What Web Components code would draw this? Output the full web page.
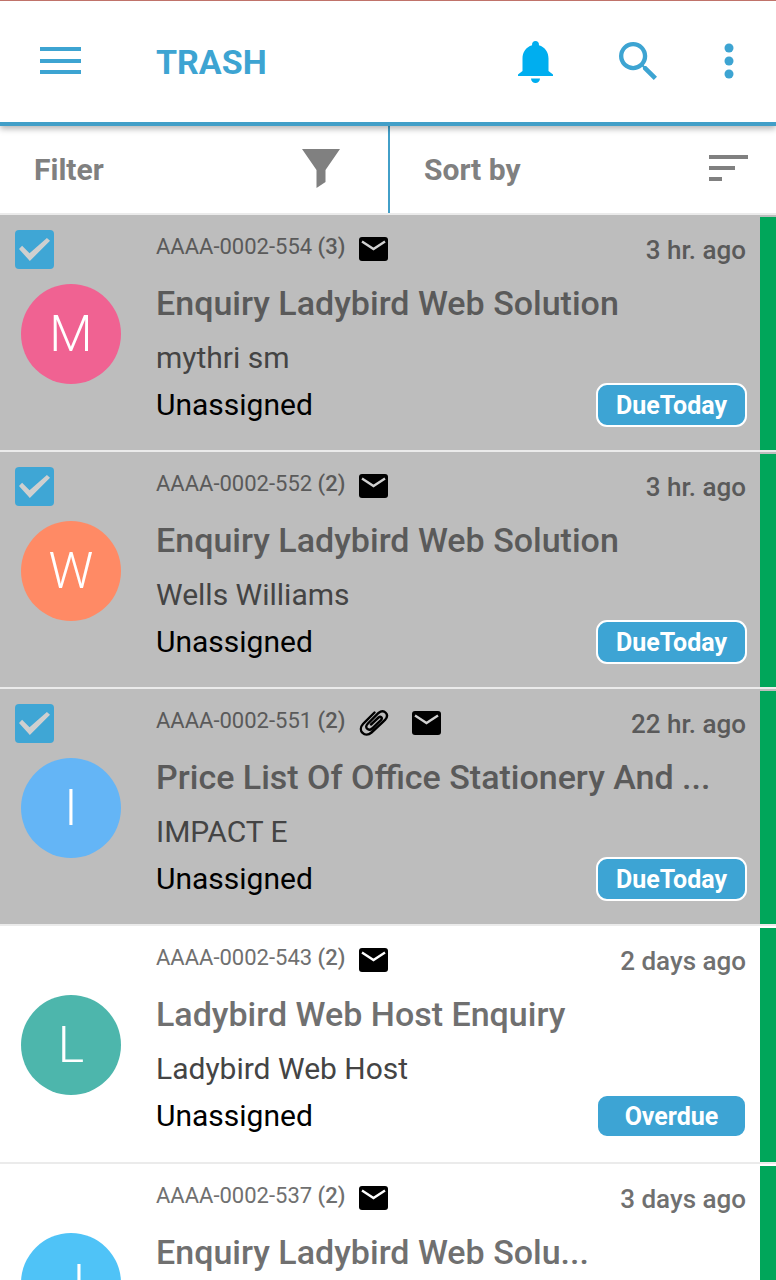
<!DOCTYPE html>
<html lang="en">
<head>
<meta charset="utf-8">
<meta name="viewport" content="width=device-width, initial-scale=1">
<title>Trash</title>
<style>
  html, body { margin: 0; }
  body { font-family: Roboto, "Liberation Sans", sans-serif; background: #fff; }
</style>
</head>
<body>
<ticket-app></ticket-app>

<template id="t-app">
  <style>
    :host { display: flex; flex-direction: column; height: 100vh; }
    app-bar, filter-bar { flex: none; }
    main { flex: 1; min-height: 0; overflow-y: auto; scrollbar-width: none; }
  </style>
  <app-bar>TRASH</app-bar>
  <filter-bar></filter-bar>
  <main>
    <ticket-row selected number="AAAA-0002-554" count="(3)" time="3 hr. ago" initial="M" color="#f06292" badge="DueToday">
      Enquiry Ladybird Web Solution<span slot="from">mythri sm</span><span slot="agent">Unassigned</span>
    </ticket-row>
    <ticket-row selected number="AAAA-0002-552" count="(2)" time="3 hr. ago" initial="W" color="#ff8a65" badge="DueToday">
      Enquiry Ladybird Web Solution<span slot="from">Wells Williams</span><span slot="agent">Unassigned</span>
    </ticket-row>
    <ticket-row selected attachment number="AAAA-0002-551" count="(2)" time="22 hr. ago" initial="I" color="#64b5f6" badge="DueToday">
      Price List Of Office Stationery And ...<span slot="from">IMPACT E</span><span slot="agent">Unassigned</span>
    </ticket-row>
    <ticket-row number="AAAA-0002-543" count="(2)" time="2 days ago" initial="L" color="#4db6ac" badge="Overdue">
      Ladybird Web Host Enquiry<span slot="from">Ladybird Web Host</span><span slot="agent">Unassigned</span>
    </ticket-row>
    <ticket-row number="AAAA-0002-537" count="(2)" time="3 days ago" initial="J" color="#4fc3f7">
      Enquiry Ladybird Web Solu...
    </ticket-row>
  </main>
</template>

<template id="t-bar">
  <style>
    :host { display: block; position: relative; z-index: 1; }
    header { display: flex; align-items: center; height: 121px; color: #3da4d2; background: #fff;
      border-top: 1px solid #c0736a; border-bottom: 4px solid #429fc8; box-shadow: 0 3px 6px rgba(0,0,0,.28); }
    button { all: unset; display: flex; color: inherit; cursor: pointer; }
    svg { display: block; }
    .menu { padding: 0 0 2px 40px; width: 156px; box-sizing: border-box; }
    h1 { margin: 0; flex: 1; font-size: 34px; line-height: 40px; font-weight: 700; }
    .bell { color: #00aeef; padding-right: 66px; }
    .find { padding-right: 67px; }
    .more { padding-right: 42px; }
    .find, .more { padding-bottom: 2px; }
  </style>
  <header>
    <button class="menu" aria-label="Menu"><svg width="41" height="28" fill="currentColor"><path d="M0 0h41v4H0zM0 12h41v4H0zM0 23h41v4H0z"/></svg></button>
    <h1><slot></slot></h1>
    <button class="bell" aria-label="Notifications"><svg width="35" height="42" viewBox="0 0 35 42" fill="currentColor"><path d="M17.500 0a3.500 3.500 0 0 1 3.400 4.300C27 6 30.500 11.500 30.500 17.500V30l4.500 3.500V35H0v-1.500L4.500 30V17.500C4.500 11.500 8 6 14.100 4.300A3.500 3.500 0 0 1 17.500 0zM13 37.500h9a4.500 4.500 0 0 1-9 0z"/></svg></button>
    <button class="find" aria-label="Search"><svg width="38" height="38" viewBox="3 3 17.490 17.490" fill="currentColor"><path d="M15.500 14h-.79l-.28-.27A6.471 6.471 0 0 0 16 9.500 6.500 6.500 0 1 0 9.500 16c1.610 0 3.090-.59 4.230-1.570l.27.28v.79l5 4.990L20.490 19l-4.990-5zm-6 0C7.010 14 5 11.990 5 9.500S7.010 5 9.500 5 14 7.010 14 9.500 11.990 14 9.500 14z"/></svg></button>
    <button class="more" aria-label="More options"><svg width="10" height="36" viewBox="0 0 10 36" fill="currentColor"><circle cx="5" cy="5" r="4.500"/><circle cx="5" cy="18" r="4.500"/><circle cx="5" cy="31" r="4.500"/></svg></button>
  </header>
</template>

<template id="t-filter">
  <style>
    :host { display: grid; grid-template-columns: 1fr 1fr; height: 87px; background: #fff; }
    button { all: unset; display: flex; align-items: center; justify-content: space-between; box-sizing: border-box;
      font-size: 30px; line-height: 36px; font-weight: 700; color: #808080; cursor: pointer; padding: 1px 28px 0 34px; }
    .filter { padding-right: 48px; }
    .sort { border-left: 2px solid #429fc8; }
    svg { display: block; margin-bottom: 4px; }
  </style>
  <button class="filter">Filter<svg width="38" height="39" viewBox="0 0 38 39" fill="currentColor"><path d="M0 0h38L23.500 21v12L14.500 39V21z"/></svg></button>
  <button class="sort">Sort by<svg width="39" height="26" fill="currentColor"><path d="M0 0h39v4H0zM0 11h26v4H0zM0 22h13v4H0z"/></svg></button>
</template>

<template id="t-row">
  <style>
    :host { display: grid; grid-template-columns: 156px minmax(0,1fr) 16px; height: 236px; border-top: 2px solid #ebebeb; background: #fff; overflow: hidden; color: #707070; --fold: #fff; }
    :host([selected]) { height: 235px; background: #bdbdbd; color: #5a5a5a; --fold: #d0d0d0; }
    .left { display: flex; flex-direction: column; padding-top: 15px; }
    input { appearance: none; margin: 0 0 15px 15px; width: 39px; height: 39px; border-radius: 4px; background: transparent; display: grid; }
    input:checked { background: #3fa6d5; }
    input:checked::before { content: ""; background: #cfcfcf; margin: 8px 4px;
      clip-path: polygon(0 48%, 10% 34%, 34% 66%, 90% 0, 100% 12%, 35% 100%); }
    :host(:not([selected])) input { visibility: hidden; }
    .avatar { width: 100px; height: 100px; margin-left: 21px; border-radius: 50%; display: grid; place-items: center;
      color: #fff; font-size: 50px; line-height: 60px; font-weight: 300; }
    .body { display: flex; flex-direction: column; padding-right: 13px; white-space: nowrap; }
    .top, .foot { display: flex; align-items: center; }
    .top { height: 56px; padding-top: 12px; box-sizing: border-box; }
    .id { font-size: 22px; line-height: 26px; font-weight: 400; margin: 0 14px 4px 0; }
    .id b { font-weight: 500; }
    svg { display: block; flex: none; }
    .clip { margin-right: 23px; }
    :host(:not([attachment])) .clip { display: none; }
    time { margin-left: auto; font-size: 26px; line-height: 30px; font-weight: 500; padding: 2px 1px 0 0; }
    h2 { margin: 12px 0 0; font-size: 34px; line-height: 40px; font-weight: 500; }
    .from { font-size: 30px; line-height: 36px; margin-top: 17px; color: #444; }
    .foot { height: 44px; justify-content: space-between; margin-top: 7px; }
    .agent { font-size: 30px; line-height: 36px; color: #000; }
    .badge { box-sizing: border-box; width: 151px; height: 44px; border: 2px solid #fff; border-radius: 11px; background: #3da4d4;
      color: #fff; font-size: 25px; line-height: 42px; font-weight: 700; text-align: center; }
    .strip { background: #00a65a; margin-top: 2px; }
  </style>
  <div class="left"><input type="checkbox"><div class="avatar"></div></div>
  <div class="body">
    <div class="top"><span class="id"><span class="number"></span> <b></b></span>
      <svg class="clip" width="30" height="28" viewBox="0 0 30 28" fill="none" stroke="#000" stroke-width="2.400" stroke-linecap="round"><path d="M15.500 3.500L4 15c-6 6.500 2 14.500 8.500 8.500L26 11c5-5.500-1-11.500-6.500-7L8.500 15c-3.500 3.500 1 7.500 4.500 4.500L22 11c2-2.500-.5-4-2.500-2.500L12 15.500"/></svg>
      <svg width="30" height="24" viewBox="0 0 30 24"><rect width="29" height="24" rx="3"/><path d="M3 4.500l11.500 7.500L26 4.500" fill="none" stroke="var(--fold)" stroke-width="2.400"/></svg>
      <time></time></div>
    <h2><slot></slot></h2>
    <div class="from"><slot name="from"></slot></div>
    <div class="foot"><span class="agent"><slot name="agent"></slot></span><span class="badge"></span></div>
  </div>
  <div class="strip"></div>
</template>

<script>
  class TemplateElement extends HTMLElement {
    constructor() {
      super();
      this.attachShadow({ mode: "open" }).append(document.getElementById(this.constructor.template).content.cloneNode(true));
    }
  }
  class AppBar extends TemplateElement { static template = "t-bar"; }
  class FilterBar extends TemplateElement { static template = "t-filter"; }
  class TicketRow extends TemplateElement {
    static template = "t-row";
    connectedCallback() {
      const q = s => this.shadowRoot.querySelector(s);
      const a = n => this.getAttribute(n);
      const box = q("input");
      box.checked = this.hasAttribute("selected");
      box.setAttribute("aria-label", "Select " + a("number"));
      box.onchange = () => this.toggleAttribute("selected", box.checked);
      q(".avatar").textContent = a("initial");
      q(".avatar").style.background = a("color");
      q(".number").textContent = a("number");
      q(".id b").textContent = a("count");
      q("time").textContent = a("time");
      q(".badge").textContent = a("badge");
    }
  }
  class TicketApp extends TemplateElement { static template = "t-app"; }
  customElements.define("app-bar", AppBar);
  customElements.define("filter-bar", FilterBar);
  customElements.define("ticket-row", TicketRow);
  customElements.define("ticket-app", TicketApp);
</script>
</body>
</html>
